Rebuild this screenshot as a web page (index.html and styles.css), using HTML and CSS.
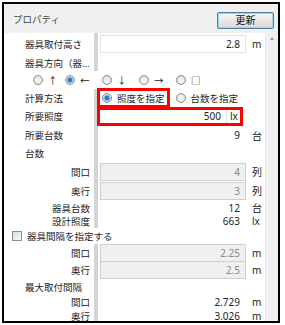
FILE: index.html
```html
<!DOCTYPE html>
<html lang="ja">
<head>
    <meta charset="UTF-8">
    <meta name="viewport" content="width=device-width, initial-scale=1.0">
    <title>プロパティ</title>
    <link rel="stylesheet" href="styles.css">
</head>
<body>
    <div class="window">
        <div class="header">
            <span class="title">プロパティ</span>
            <button class="btn">更新</button>
        </div>
        <div class="content">
            <div class="grid">
                <div class="row r1">
                    <div class="label">器具取付高さ</div>
                    <div class="value"><div class="input">2.8</div></div>
                    <div class="unit">m</div>
                </div>
                <div class="row r2">
                    <div class="label trunc">器具方向（器…</div>
                </div>
                <div class="row r3 span">
                    <div class="radios">
                        <span class="opt o1"><i class="radio"></i>↑</span>
                        <span class="opt"><i class="radio on"></i>←</span>
                        <span class="opt"><i class="radio"></i>↓</span>
                        <span class="opt"><i class="radio"></i>→</span>
                        <span class="opt"><i class="radio"></i>□</span>
                    </div>
                </div>
                <div class="row r4">
                    <div class="label">計算方法</div>
                    <div class="value methods">
                        <span class="opt mark"><i class="radio on"></i>照度を指定</span>
                        <span class="opt m2"><i class="radio"></i>台数を指定</span>
                    </div>
                </div>
                <div class="row r5">
                    <div class="label">所要照度</div>
                    <div class="value wide mark2">
                        <div class="input plain">500</div>
                        <div class="unit">lx</div>
                    </div>
                </div>
                <div class="row r6">
                    <div class="label">所要台数</div>
                    <div class="value"><div class="text">9</div></div>
                    <div class="unit">台</div>
                </div>
                <div class="row r7">
                    <div class="label">台数</div>
                </div>
                <div class="row r8">
                    <div class="label sub">間口</div>
                    <div class="value"><div class="input off">4</div></div>
                    <div class="unit">列</div>
                </div>
                <div class="row r9">
                    <div class="label sub">奥行</div>
                    <div class="value"><div class="input off">3</div></div>
                    <div class="unit">列</div>
                </div>
                <div class="row r10">
                    <div class="label sub">器具台数</div>
                    <div class="value"><div class="text">12</div></div>
                    <div class="unit">台</div>
                </div>
                <div class="row r11">
                    <div class="label sub">設計照度</div>
                    <div class="value"><div class="text">663</div></div>
                    <div class="unit">lx</div>
                </div>
                <div class="row r12 span">
                    <span class="check"><i class="box"></i>器具間隔を指定する</span>
                </div>
                <div class="row r13">
                    <div class="label sub">間口</div>
                    <div class="value"><div class="input off">2.25</div></div>
                    <div class="unit">m</div>
                </div>
                <div class="row r14">
                    <div class="label sub">奥行</div>
                    <div class="value"><div class="input off">2.5</div></div>
                    <div class="unit">m</div>
                </div>
                <div class="row r15">
                    <div class="label">最大取付間隔</div>
                </div>
                <div class="row r16">
                    <div class="label sub">間口</div>
                    <div class="value"><div class="text">2.729</div></div>
                    <div class="unit">m</div>
                </div>
                <div class="row r17">
                    <div class="label sub">奥行</div>
                    <div class="value"><div class="text">3.026</div></div>
                    <div class="unit">m</div>
                </div>
            </div>
            <div class="scrollbar"><span class="arrow"></span></div>
        </div>
    </div>
</body>
</html>
```

FILE: styles.css
```css
body {
    margin: 0;
    background-color: #fff;
    font-family: "Noto Sans", "Noto Sans CJK JP", sans-serif;
    font-size: 9.5px;
    color: #222;
}

.window {
    margin: 2px 0 0 2px;
    width: 274px;
    height: 317px;
    border: 2px solid #000;
    overflow: hidden;
    display: flex;
    flex-direction: column;
}

.header {
    height: 29px;
    flex-shrink: 0;
    background-color: #f0f0f0;
    display: flex;
    align-items: center;
    justify-content: space-between;
    padding: 0 4px 0 9px;
}

.title {
    color: #444;
}

.btn {
    display: flex;
    align-items: center;
    justify-content: center;
    width: 57px;
    height: 17px;
    margin-top: 3px;
    padding: 0;
    font-family: "Noto Sans CJK JP", sans-serif;
    font-size: 10px;
    line-height: 1;
    color: #111;
    border: 1px solid #4d7ea8;
    border-radius: 2px;
    background: linear-gradient(#f6f6f6, #e8e8e8 50%, #d9d9d9);
    box-shadow: inset 0 0 0 1px #9fd0f0;
}

.content {
    flex: 1;
    display: flex;
    background-color: #fff;
}

.grid {
    flex: 1;
    display: flex;
    flex-direction: column;
    background: linear-gradient(to right, transparent 90px, #d4d4d4 90px, #d4d4d4 94px, transparent 94px);
}

.row {
    display: grid;
    grid-template-columns: 90px 6px 146px 19px;
    align-items: center;
}

.row .label { grid-column: 1; }
.row .value { grid-column: 3; }
.row .unit { grid-column: 4; }

.span {
    display: flex;
    background-color: #fff;
}

.r1 { height: 22px; }
.r2 { height: 16px; }
.r3 { height: 18px; }
.r4 { height: 17px; }
.r5 { height: 20px; }
.r6 { height: 18px; }
.r7 { height: 18px; }
.r8 { height: 19px; }
.r9 { height: 19px; }
.r10 { height: 14px; }
.r11 { height: 14px; }
.r12 { height: 16px; }
.r13 { height: 17px; }
.r14 { height: 18px; }
.r15 { height: 15px; }
.r16 { height: 15px; }
.r17 { height: 14px; }

.label {
    padding-left: 21px;
    white-space: nowrap;
    overflow: hidden;
}

.label.sub {
    padding: 0 4px 0 0;
    text-align: right;
}

.input {
    height: 16px;
    line-height: 16px;
    border: 1px solid #dde3ea;
    background-color: #fff;
    text-align: right;
    padding-right: 5px;
    font-size: 10px;
}

.input.off {
    background-color: #f0f0f0;
    border-color: #cfcfcf;
    color: #8a8a8a;
}

.text {
    text-align: right;
    padding-right: 6px;
    font-size: 10px;
}

.unit {
    padding-left: 6px;
    font-size: 10px;
}

.radios {
    display: flex;
    padding-left: 29px;
}

.opt {
    display: flex;
    align-items: center;
    width: 37px;
    white-space: nowrap;
}

.opt.o1 { width: 32px; }

.radio {
    width: 8px;
    height: 8px;
    border: 1px solid #8e8f8f;
    border-radius: 50%;
    background: radial-gradient(circle at 50% 60%, #fafafa, #d6d6d6);
    margin-right: 5px;
    flex-shrink: 0;
}

.radio.on {
    background: radial-gradient(circle, #1e5a9a 0, #3a8fd4 2px, #9ccbef 3px, #e6e6e6 4px);
}

.methods {
    grid-column: 3 / 5;
    display: flex;
    align-items: center;
    height: 14px;
}

.mark {
    width: auto;
    padding: 0 2px;
    height: 14px;
    outline: 3px solid #f00;
    margin-right: 9px;
}

.m2 {
    width: auto;
}

.mark2 {
    grid-column: 3 / 5;
    display: flex;
    align-items: center;
    height: 13px;
    margin-right: 6px;
    outline: 3px solid #f00;
}

.mark2 .input {
    flex: 1;
    height: 13px;
    line-height: 13px;
    border: none;
    border-right: 1px solid #dde3ea;
}

.mark2 .unit {
    padding-left: 3px;
    width: 10px;
}

.check {
    display: flex;
    align-items: center;
    padding-left: 8px;
    white-space: nowrap;
}

.box {
    width: 8px;
    height: 8px;
    border: 1px solid #8e8f8f;
    background: linear-gradient(135deg, #dcdcdc, #fafafa);
    margin-right: 5px;
}

.scrollbar {
    width: 13px;
    background-color: #f0f0f0;
    border-left: 1px solid #e6e6e6;
    display: flex;
    justify-content: center;
    padding-top: 4px;
}

.arrow {
    width: 0;
    height: 0;
    border-left: 2px solid transparent;
    border-right: 2px solid transparent;
    border-bottom: 3px solid #9a9a9a;
}
```
